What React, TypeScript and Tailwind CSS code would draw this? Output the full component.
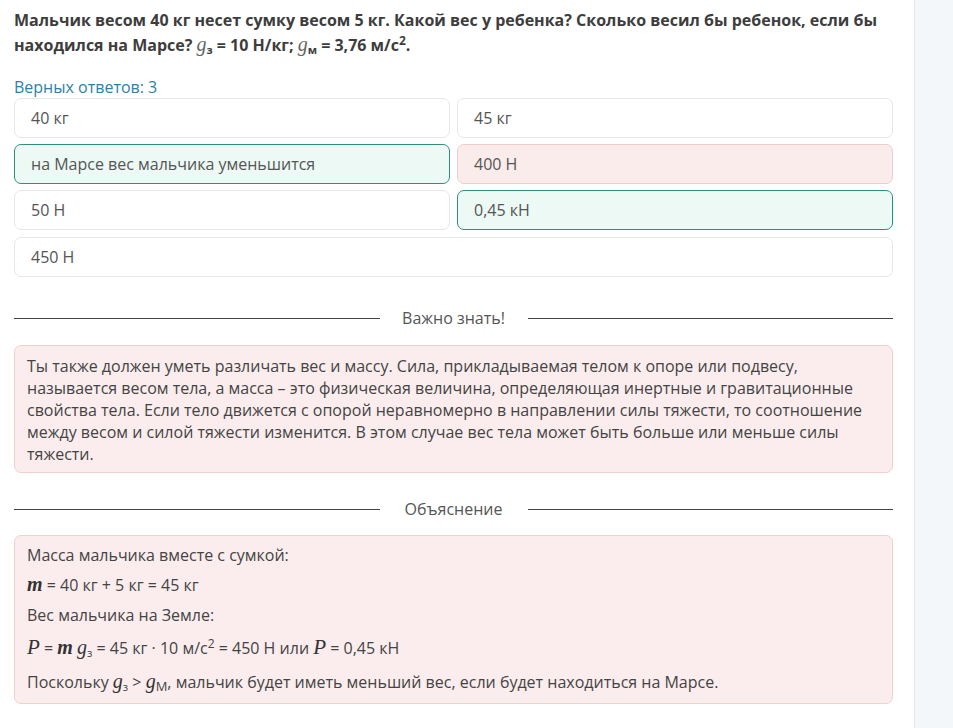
import React from "react";

const M = ({ children, className = "" }: { children: React.ReactNode; className?: string }) => (
  <span className={`italic ${className}`} style={{ fontFamily: '"Liberation Serif","DejaVu Serif",serif' }}>
    {children}
  </span>
);

const Answer = ({ text, kind }: { text: string; kind?: "ok" | "bad" }) => {
  const cls =
    kind === "ok"
      ? "bg-[#ecf9f4] border-[#2f8f7f]"
      : kind === "bad"
      ? "bg-[#fbecec] border-[#f1cccc]"
      : "bg-white border-[#e6e6e6]";
  return (
    <div className={`h-[40px] flex items-center px-4 rounded-[7px] border ${cls} text-[16px] text-[#555]`}>{text}</div>
  );
};

const Divider = ({ label }: { label: string }) => (
  <div className="flex items-center h-[22px]">
    <div className="flex-1 h-px bg-[#444]" />
    <div className="w-[148px] text-center text-[16px] text-[#555]">{label}</div>
    <div className="flex-1 h-px bg-[#444]" />
  </div>
);

export default function App() {
  return (
    <div className="flex w-[953px] h-[728px] bg-white overflow-hidden" style={{ fontFamily: '"Open Sans", "Noto Sans", sans-serif' }}>
      <div className="w-[914px] pl-[14px] pr-[21px] pt-[8px]">
        <div className="text-[16px] font-bold text-[#3d3d3d] leading-[25px]">
          Мальчик весом 40 кг несет сумку весом 5 кг. Какой вес у ребенка? Сколько весил бы ребенок, если бы
          находился на Марсе? <M className="font-normal text-[#666] text-[20px] leading-[20px]">g</M>
          <sub className="text-[11px]">з</sub> = 10 Н/кг; <M className="font-normal text-[#666] text-[20px] leading-[20px]">g</M>
          <sub className="text-[11px]">м</sub> = 3,76 м/с<sup className="text-[12px]">2</sup>.
        </div>
        <div className="mt-[18px] text-[16px] text-[#2f80a7] leading-[22px]">Верных ответов: 3</div>
        <div className="grid grid-cols-2 gap-x-[7px] gap-y-[6px]">
          <Answer text="40 кг" />
          <Answer text="45 кг" />
          <Answer text="на Марсе вес мальчика уменьшится" kind="ok" />
          <Answer text="400 Н" kind="bad" />
          <Answer text="50 Н" />
          <Answer text="0,45 кН" kind="ok" />
          <div className="col-span-2 mt-[1px]">
            <Answer text="450 Н" />
          </div>
        </div>
        <div className="mt-[30px]">
          <Divider label="Важно знать!" />
        </div>
        <div className="mt-[16px] bg-[#fbeded] border border-[#f2d0d0] rounded-[7px] px-[12px] pt-[9px] pb-[7px] text-[16px] leading-[22px] text-[#444]">
          Ты также должен уметь различать вес и массу. Сила, прикладываемая телом к опоре или подвесу,
          называется весом тела, а масса – это физическая величина, определяющая инертные и гравитационные
          свойства тела. Если тело движется с опорой неравномерно в направлении силы тяжести, то соотношение
          между весом и силой тяжести изменится. В этом случае вес тела может быть больше или меньше силы
          тяжести.
        </div>
        <div className="mt-[25px]">
          <Divider label="Объяснение" />
        </div>
        <div className="mt-[15px] bg-[#fbeded] border border-[#f2d0d0] rounded-[7px] px-[12px] pt-[8px] pb-[10px] text-[16px] leading-[22px] text-[#444] flex flex-col gap-[8px]">
          <div>Масса мальчика вместе с сумкой:</div>
          <div>
            <M className="text-[20px] leading-[20px] font-bold text-[#333]">m</M> = 40 кг + 5 кг = 45 кг
          </div>
          <div>Вес мальчика на Земле:</div>
          <div className="leading-[24px] mt-[2px]">
            <M className="text-[21px] leading-[20px] text-[#333]">P</M> = <M className="text-[20px] leading-[20px] font-bold text-[#333]">m</M>{" "}
            <M className="text-[20px] leading-[20px] text-[#333]">g</M>
            <sub className="text-[11px]">з</sub> = 45 кг · 10 м/с<sup className="text-[12px]">2</sup> = 450 Н или{" "}
            <M className="text-[21px] leading-[20px] text-[#333]">P</M> = 0,45 кН
          </div>
          <div className="mt-[3px]">
            Поскольку <M className="text-[20px] leading-[20px] text-[#333]">g</M>
            <sub className="text-[11px]">з</sub> &gt; <M className="text-[20px] leading-[20px] text-[#333]">g</M>
            <sub className="text-[13px]">М</sub>, мальчик будет иметь меньший вес, если будет находиться на Марсе.
          </div>
        </div>
      </div>
      <div className="flex-1 bg-[#f4f7fa] border-l border-[#e4e9ef]" />
    </div>
  );
}
